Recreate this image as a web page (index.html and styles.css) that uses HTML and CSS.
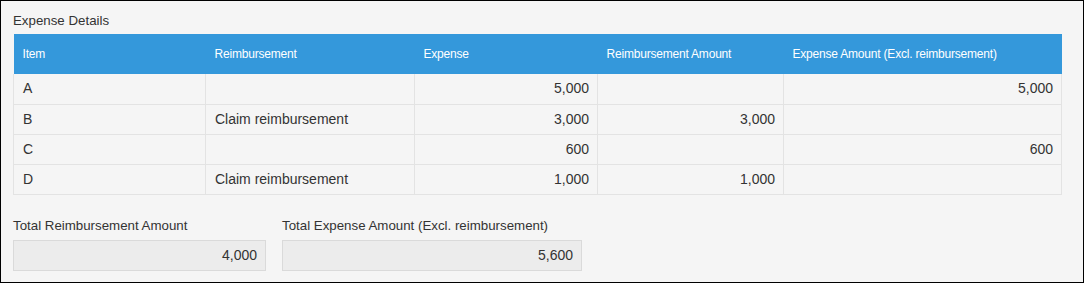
FILE: index.html
```html
<!DOCTYPE html>
<html lang="en">
<head>
<meta charset="utf-8">
<title>Expense Details</title>
<link rel="stylesheet" href="styles.css">
</head>
<body>
<div class="panel">
  <div class="label title">Expense Details</div>
  <table class="grid">
    <colgroup>
      <col class="c1"><col class="c2"><col class="c3"><col class="c4"><col class="c5">
    </colgroup>
    <thead>
      <tr>
        <th>Item</th>
        <th>Reimbursement</th>
        <th>Expense</th>
        <th>Reimbursement Amount</th>
        <th>Expense Amount (Excl. reimbursement)</th>
      </tr>
    </thead>
    <tbody>
      <tr><td>A</td><td></td><td class="num">5,000</td><td class="num"></td><td class="num">5,000</td></tr>
      <tr><td>B</td><td>Claim reimbursement</td><td class="num">3,000</td><td class="num">3,000</td><td class="num"></td></tr>
      <tr><td>C</td><td></td><td class="num">600</td><td class="num"></td><td class="num">600</td></tr>
      <tr><td>D</td><td>Claim reimbursement</td><td class="num">1,000</td><td class="num">1,000</td><td class="num"></td></tr>
    </tbody>
  </table>
  <div class="totals">
    <div class="field f1">
      <div class="label">Total Reimbursement Amount</div>
      <div class="box">4,000</div>
    </div>
    <div class="field f2">
      <div class="label">Total Expense Amount (Excl. reimbursement)</div>
      <div class="box">5,600</div>
    </div>
  </div>
</div>
</body>
</html>
```
FILE: styles.css
```css
html, body {
  margin: 0;
  padding: 0;
}
body {
  font-family: "Liberation Sans", Arial, sans-serif;
  color: #333;
  background: #f5f5f5;
}
.panel {
  box-sizing: border-box;
  width: 1084px;
  height: 283px;
  border: 1px solid #000;
  background: #f5f5f5;
  padding: 12px 0 0 12px;
}
.label {
  font-size: 13.3px;
  line-height: 16px;
  color: #333;
  white-space: nowrap;
}
.title {
  margin-bottom: 5px;
}
.grid {
  border-collapse: collapse;
  table-layout: fixed;
  width: 1048px;
}
.c1 { width: 192px; }
.c2 { width: 209px; }
.c3 { width: 183px; }
.c4 { width: 186px; }
.c5 { width: 278px; }
.grid th {
  background: #3498db;
  color: #fff;
  font-weight: normal;
  font-size: 12px;
  letter-spacing: -0.2px;
  text-align: left;
  height: 40px;
  padding: 0 8px 0 9px;
  border: none;
  box-sizing: border-box;
}
.grid td {
  font-size: 14px;
  color: #333;
  height: 30px;
  box-sizing: border-box;
  padding: 0 8px 1px 9px;
  border: 1px solid #e3e3e3;
  border-top: none;
  white-space: nowrap;
}
.grid td.num {
  text-align: right;
}
.totals {
  display: flex;
  gap: 16px;
  margin-top: 23px;
}
.field .label {
  margin-bottom: 6px;
}
.box {
  box-sizing: border-box;
  height: 31px;
  border: 1px solid #dadada;
  background: #ececec;
  font-size: 14px;
  line-height: 29px;
  text-align: right;
  padding-right: 8px;
  color: #333;
}
.f1 .box { width: 253px; }
.f2 .box { width: 300px; }
```
